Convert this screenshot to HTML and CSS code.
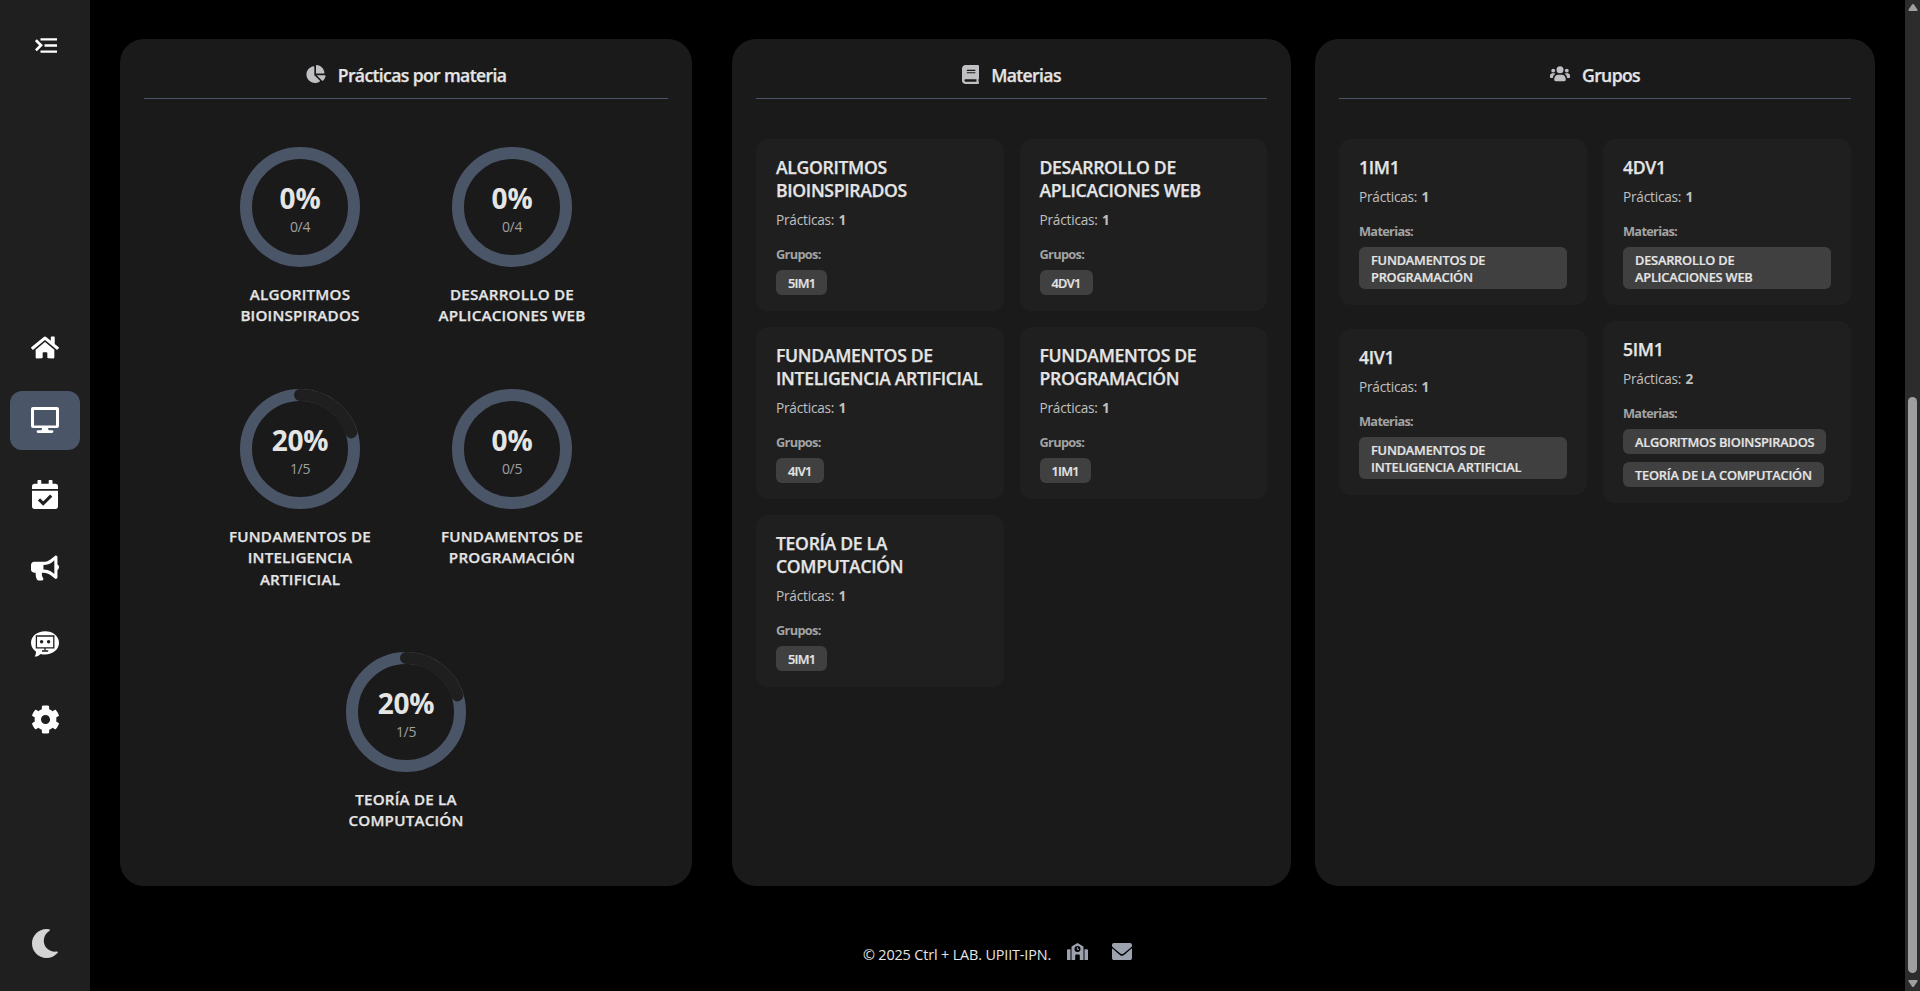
FILE: index.html
```html
<!DOCTYPE html>
<html lang="es">
<head>
<meta charset="utf-8">
<title>Ctrl + LAB</title>
<link rel="stylesheet" href="styles.css">
</head>
<body>
<svg class="sprite" aria-hidden="true">
  <symbol id="i-home" viewBox="0 0 576 512"><path d="M280.37 148.26L96 300.11V464a16 16 0 0 0 16 16l112.06-.29a16 16 0 0 0 15.92-16V368a16 16 0 0 1 16-16h64a16 16 0 0 1 16 16v95.64a16 16 0 0 0 16 16.05L464 480a16 16 0 0 0 16-16V300L295.67 148.26a12.19 12.19 0 0 0-15.3 0zM571.6 251.47L488 182.56V44.05a12 12 0 0 0-12-12h-56a12 12 0 0 0-12 12v72.61L318.47 43a48 48 0 0 0-61 0L4.34 251.47a12 12 0 0 0-1.6 16.9l25.5 31A12 12 0 0 0 45.15 301l235.22-193.74a12.19 12.19 0 0 1 15.3 0L530.9 301a12 12 0 0 0 16.9-1.6l25.5-31a12 12 0 0 0-1.7-16.93z"/></symbol>
  <symbol id="i-horn" viewBox="0 0 576 512"><path d="M576 240c0-23.63-12.95-44.04-32-55.12V32.01C544 23.26 537.02 0 512 0c-7.12 0-14.19 2.38-19.98 7.02l-85.03 68.03C364.28 109.19 310.66 128 256 128H64c-35.35 0-64 28.65-64 64v96c0 35.35 28.65 64 64 64h33.7c-1.39 10.48-2.18 21.14-2.18 32 0 39.77 9.26 77.35 25.56 110.94 5.19 10.69 16.52 17.06 28.4 17.06h74.28c26.05 0 41.69-29.84 25.9-50.56-16.4-21.52-26.15-48.36-26.15-77.44 0-11.11 1.62-21.79 4.41-32H256c54.66 0 108.28 18.81 150.98 52.95l85.03 68.03a32.023 32.023 0 0 0 19.98 7.02c24.92 0 32-22.78 32-32V295.13C563.05 284.04 576 263.63 576 240zm-96 141.42l-33.05-26.44C392.95 311.78 325.12 288 256 288v-96c69.12 0 136.95-23.78 190.95-66.98L480 98.58v282.84z"/></symbol>
  <symbol id="i-gear" viewBox="0 0 512 512"><path d="M487.4 315.7l-42.6-24.6c4.3-23.2 4.3-47 0-70.2l42.6-24.6c4.9-2.8 7.1-8.6 5.5-14-11.1-35.6-30-67.8-54.7-94.6-3.8-4.1-10-5.1-14.8-2.3L380.8 110c-17.9-15.4-38.5-27.3-60.8-35.1V25.8c0-5.6-3.9-10.5-9.4-11.7-36.7-8.2-74.3-7.8-109.2 0-5.5 1.2-9.4 6.1-9.4 11.7V75c-22.2 7.9-42.8 19.8-60.8 35.1L88.7 85.5c-4.9-2.8-11-1.9-14.8 2.3-24.7 26.7-43.6 58.9-54.7 94.6-1.7 5.4.6 11.2 5.5 14L67.3 221c-4.3 23.2-4.3 47 0 70.2l-42.6 24.6c-4.9 2.8-7.1 8.6-5.5 14 11.1 35.6 30 67.8 54.7 94.6 3.8 4.1 10 5.1 14.8 2.3l42.6-24.6c17.9 15.4 38.5 27.3 60.8 35.1v49.2c0 5.6 3.9 10.5 9.4 11.7 36.7 8.2 74.3 7.8 109.2 0 5.5-1.2 9.4-6.1 9.4-11.7v-49.2c22.2-7.9 42.8-19.8 60.8-35.1l42.6 24.6c4.9 2.8 11 1.9 14.8-2.3 24.7-26.7 43.6-58.9 54.7-94.6 1.5-5.5-.7-11.3-5.6-14.1zM256 336c-44.1 0-80-35.9-80-80s35.9-80 80-80 80 35.9 80 80-35.9 80-80 80z"/></symbol>
  <symbol id="i-pie" viewBox="0 0 544 512"><path d="M527.79 288H290.5l158.03 158.03c6.04 6.04 15.98 6.53 22.19.68 38.7-36.46 65.32-85.61 73.13-140.86 1.34-9.46-6.51-17.85-16.06-17.85zm-15.83-64.8C503.72 103.74 408.26 8.28 288.8.04 279.68-.59 272 7.1 272 16.24V240h223.77c9.14 0 16.82-7.68 16.19-16.8zM224 288V50.71c0-9.55-8.39-17.4-17.84-16.06C86.99 51.49-4.1 155.6.14 280.37 4.5 408.51 114.83 513.59 243.03 511.98c50.4-.63 96.97-16.87 135.26-44.03 7.9-5.6 8.42-17.23 1.57-24.08L224 288z"/></symbol>
  <symbol id="i-book" viewBox="0 0 448 512" preserveAspectRatio="none"><path d="M448 360V24c0-13.3-10.7-24-24-24H96C43 0 0 43 0 96v320c0 53 43 96 96 96h328c13.3 0 24-10.7 24-24v-16c0-7.5-3.5-14.3-8.9-18.7-4.2-15.4-4.2-59.3 0-74.7 5.4-4.3 8.9-11.1 8.9-18.6zM128 134c0-3.3 2.7-6 6-6h212c3.3 0 6 2.7 6 6v20c0 3.3-2.7 6-6 6H134c-3.3 0-6-2.7-6-6v-20zm0 64c0-3.3 2.7-6 6-6h212c3.3 0 6 2.7 6 6v20c0 3.3-2.7 6-6 6H134c-3.3 0-6-2.7-6-6v-20zm253.4 250H96c-17.7 0-32-14.3-32-32 0-17.6 14.4-32 32-32h285.4c-1.9 17.1-1.9 46.9 0 64z"/></symbol>
  <symbol id="i-mail" viewBox="0 64 512 384" preserveAspectRatio="none"><path d="M502.3 190.8c3.9-3.1 9.7-.2 9.7 4.7V400c0 26.5-21.5 48-48 48H48c-26.5 0-48-21.5-48-48V195.6c0-5 5.7-7.8 9.7-4.7 22.4 17.4 52.1 39.5 154.1 113.6 21.1 15.4 56.7 47.8 92.2 47.6 35.7.3 72-32.8 92.3-47.6 102-74.1 131.6-96.3 154-113.7zM256 320c23.2.4 56.6-29.2 73.4-41.4 132.7-96.3 142.8-104.7 173.4-128.7 5.8-4.5 9.2-11.5 9.2-18.9v-19c0-26.5-21.5-48-48-48H48c-26.5 0-48 21.5-48 48v19c0 7.4 3.4 14.3 9.2 18.9 30.6 23.9 40.7 32.4 173.4 128.7 16.8 12.2 50.2 41.8 73.4 41.4z"/></symbol>
</svg>

<div class="app">
  <aside class="sidebar">
    <svg class="menu" viewBox="0 0 22 15" fill="none" stroke="currentColor"><path d="M.9 2.200 6 7.300.9 12.400" stroke-width="2.700"/><path d="M5.500 1.300H22M9.500 7.500H22M5.500 13.700H22" stroke-width="2.300"/></svg>
    <nav class="nav">
      <a class="nav-item home"><svg width="28" height="25"><use href="#i-home"/></svg></a>
      <a class="nav-item active"><svg width="28" height="26" viewBox="0 0 28 26"><path fill-rule="evenodd" d="M2 0h24a2 2 0 0 1 2 2v17a2 2 0 0 1-2 2H17l.6 2.200H21a1.400 1.400 0 0 1 0 2.800H7a1.400 1.400 0 0 1 0-2.800h3.600L11 21H2a2 2 0 0 1-2-2V2a2 2 0 0 1 2-2zm1 3v15.500h22V3z"/></svg></a>
      <a class="nav-item calendar"><svg width="26" height="29" viewBox="0 0 26 29"><path d="M0 9V6.500a2.700 2.700 0 0 1 2.700-2.700H5.500V1a.9.9 0 0 1 .9-1h2a.9.9 0 0 1 .9 1v2.800h7.400V1a.9.9 0 0 1 .9-1h2a.9.9 0 0 1 .9 1v2.800h2.800A2.700 2.700 0 0 1 26 6.500V9zM0 10.800h26v15.500a2.700 2.700 0 0 1-2.700 2.700H2.700A2.700 2.700 0 0 1 0 26.300z"/><path class="cut-line" stroke-width="3" d="m7 19.400 4.200 4.200 8-8"/></svg></a>
      <a class="nav-item notices"><svg width="28" height="26"><use href="#i-horn"/></svg></a>
      <a class="nav-item bot"><svg width="28" height="26" viewBox="0 0 28 26"><path d="M14 .3C6.200.300 0 5.300 0 11.800c0 3.500 1.900 6.600 4.900 8.800.2 2-.3 3.700-1.300 5 2.500 0 4.500-1.100 6-2.700 1.400.4 2.800.6 4.400.6 7.800 0 14-5 14-11.700S21.800.3 14 .3z"/><path class="cut-line" stroke-width="1.300" d="M5.400 5h17.400v11.800H5.400zM14 16.800v3M11 20h6.200"/><circle class="cut" cx="10.600" cy="10.800" r="1.700"/><circle class="cut" cx="17.600" cy="10.800" r="1.700"/></svg></a>
      <a class="nav-item settings"><svg width="29" height="29"><use href="#i-gear"/></svg></a>
    </nav>
    <svg class="moon" viewBox="0 0 26 29"><path d="M14.500 0C6.500 0 0 6.500 0 14.500S6.500 29 14.500 29c4.400 0 8.300-1.900 11-5 .7-.8.200-1.700-.8-1.500C17.800 23.500 11.800 18.500 11.800 11.700c0-4.100 2.200-7.600 5.500-9.700 1-.6.700-1.700-.3-1.800A14 14 0 0 0 14.500 0z"/></svg>
  </aside>

  <main class="main">
    <div class="panels">
      <section class="panel">
        <h2 class="panel-title"><svg width="20" height="18"><use href="#i-pie"/></svg><span>Prácticas por materia</span></h2>
        <div class="rings">
          <div class="ring-item"><div class="ring"><svg width="120" height="120"><circle class="track" cx="60" cy="60" r="54"/></svg><div class="ring-text"><b>0%</b><span>0/4</span></div></div><p>ALGORITMOS<br>BIOINSPIRADOS</p></div>
          <div class="ring-item"><div class="ring"><svg width="120" height="120"><circle class="track" cx="60" cy="60" r="54"/></svg><div class="ring-text"><b>0%</b><span>0/4</span></div></div><p>DESARROLLO DE<br>APLICACIONES WEB</p></div>
          <div class="ring-item"><div class="ring"><svg width="120" height="120"><circle class="track" cx="60" cy="60" r="54"/><circle class="value" cx="60" cy="60" r="54" pathLength="100" stroke-dasharray="20 100" transform="rotate(-90 60 60)"/></svg><div class="ring-text"><b>20%</b><span>1/5</span></div></div><p>FUNDAMENTOS DE<br>INTELIGENCIA<br>ARTIFICIAL</p></div>
          <div class="ring-item"><div class="ring"><svg width="120" height="120"><circle class="track" cx="60" cy="60" r="54"/></svg><div class="ring-text"><b>0%</b><span>0/5</span></div></div><p>FUNDAMENTOS DE<br>PROGRAMACIÓN</p></div>
          <div class="ring-item"><div class="ring"><svg width="120" height="120"><circle class="track" cx="60" cy="60" r="54"/><circle class="value" cx="60" cy="60" r="54" pathLength="100" stroke-dasharray="20 100" transform="rotate(-90 60 60)"/></svg><div class="ring-text"><b>20%</b><span>1/5</span></div></div><p>TEORÍA DE LA<br>COMPUTACIÓN</p></div>
        </div>
      </section>

      <section class="panel">
        <h2 class="panel-title"><svg width="17" height="19"><use href="#i-book"/></svg><span>Materias</span></h2>
        <div class="cards">
          <article class="card"><h3>ALGORITMOS<br>BIOINSPIRADOS</h3><p class="count">Prácticas: <b>1</b></p><p class="sub">Grupos:</p><div class="tags"><span class="tag">5IM1</span></div></article>
          <article class="card"><h3>DESARROLLO DE<br>APLICACIONES WEB</h3><p class="count">Prácticas: <b>1</b></p><p class="sub">Grupos:</p><div class="tags"><span class="tag">4DV1</span></div></article>
          <article class="card"><h3>FUNDAMENTOS DE<br>INTELIGENCIA ARTIFICIAL</h3><p class="count">Prácticas: <b>1</b></p><p class="sub">Grupos:</p><div class="tags"><span class="tag">4IV1</span></div></article>
          <article class="card"><h3>FUNDAMENTOS DE<br>PROGRAMACIÓN</h3><p class="count">Prácticas: <b>1</b></p><p class="sub">Grupos:</p><div class="tags"><span class="tag">1IM1</span></div></article>
          <article class="card"><h3>TEORÍA DE LA<br>COMPUTACIÓN</h3><p class="count">Prácticas: <b>1</b></p><p class="sub">Grupos:</p><div class="tags"><span class="tag">5IM1</span></div></article>
        </div>
      </section>

      <section class="panel">
        <h2 class="panel-title"><svg class="users" width="20" height="16" viewBox="0 0 20 16"><circle cx="10" cy="3.800" r="3.500"/><circle cx="3.200" cy="4.600" r="1.900"/><circle cx="16.800" cy="4.600" r="1.900"/><path d="M4.200 13.500c0-3 1.800-4.800 4-4.800h3.600c2.200 0 4 1.800 4 4.800 0 1.200-.5 1.700-1.500 1.700H5.700c-1 0-1.500-.5-1.500-1.700zM0 11.600V9.800c0-1.500 1-2.500 2.300-2.500h1.800c.5 0 .9.200 1.300.5-1.500.9-2.400 2.300-2.600 4.300H.6c-.4 0-.6-.2-.6-.5zM20 11.600V9.800c0-1.500-1-2.500-2.300-2.500h-1.800c-.5 0-.9.200-1.300.5 1.500.9 2.400 2.300 2.600 4.300h2.200c.4 0 .6-.2.6-.5z"/></svg><span>Grupos</span></h2>
        <div class="cards groups">
          <article class="card"><h3>1IM1</h3><p class="count">Prácticas: <b>1</b></p><p class="sub">Materias:</p><div class="tags"><span class="tag wide">FUNDAMENTOS DE<br>PROGRAMACIÓN</span></div></article>
          <article class="card"><h3>4DV1</h3><p class="count">Prácticas: <b>1</b></p><p class="sub">Materias:</p><div class="tags"><span class="tag wide">DESARROLLO DE<br>APLICACIONES WEB</span></div></article>
          <article class="card"><h3>4IV1</h3><p class="count">Prácticas: <b>1</b></p><p class="sub">Materias:</p><div class="tags"><span class="tag wide">FUNDAMENTOS DE<br>INTELIGENCIA ARTIFICIAL</span></div></article>
          <article class="card"><h3>5IM1</h3><p class="count">Prácticas: <b>2</b></p><p class="sub">Materias:</p><div class="tags"><span class="tag">ALGORITMOS BIOINSPIRADOS</span><span class="tag">TEORÍA DE LA COMPUTACIÓN</span></div></article>
        </div>
      </section>
    </div>

    <footer class="footer">
      <span class="copy">© 2025 Ctrl + LAB. UPIIT-IPN.</span>
      <svg class="school" width="21" height="17" viewBox="0 0 21 17"><path fill-rule="evenodd" d="M10.500 0 16 3.200a1 1 0 0 1 .5.900V17h-3.700v-4.500a1 1 0 0 0-1-1H9.200a1 1 0 0 0-1 1V17H4.500V4.100a1 1 0 0 1 .5-.9zM10.500 3a3 3 0 1 0 0 6 3 3 0 0 0 0-6zM0 17V7.300a1 1 0 0 1 1-1h2.500V17zM21 17V7.300a1 1 0 0 0-1-1h-2.500V17z"/><path d="M10.300 4.200v2.200h1.800" fill="none" stroke="currentColor"/></svg>
      <svg class="mail" width="20" height="17"><use href="#i-mail"/></svg>
    </footer>
  </main>

  <div class="scrollbar">
    <svg class="arrow" width="10" height="7" viewBox="0 0 10 7"><path d="M5 0c.4 0 .7.200 1 .6L9.400 5.600c.4.700.1 1.400-.7 1.400H1.300c-.8 0-1.100-.7-.7-1.400L4 .6c.3-.4.6-.6 1-.6z"/></svg>
    <div class="thumb"></div>
    <svg class="arrow down" width="10" height="7" viewBox="0 0 10 7"><path d="M5 0c.4 0 .7.200 1 .6L9.400 5.600c.4.700.1 1.400-.7 1.400H1.300c-.8 0-1.100-.7-.7-1.400L4 .6c.3-.4.6-.6 1-.6z"/></svg>
  </div>
</div>
</body>
</html>
```
FILE: styles.css
```css
* { box-sizing: border-box; margin: 0; padding: 0; }
body {
  background: #000;
  color: #e5e5e5;
  font-family: "Open Sans", "Noto Sans", sans-serif;
  overflow: hidden;
}
svg { display: block; fill: currentColor; flex: none; }
.sprite { display: none; }
.app { display: flex; width: 1920px; height: 991px; }

.sidebar {
  width: 90px;
  background: #1f1f1f;
  color: #fff;
  display: flex;
  flex-direction: column;
  align-items: center;
  padding: 38px 10px 33px;
}
.menu { width: 22px; height: 15px; fill: none; margin-left: 1px; }
.nav { display: flex; flex-direction: column; gap: 16px; margin-top: 267px; width: 70px; }
.nav-item {
  height: 59px;
  border-radius: 12px;
  display: flex;
  align-items: center;
  justify-content: center;
}
.nav-item.active { background: #4a5568; }
.nav-item.active svg { margin-top: -1px; }
.nav-item.home { height: 55px; }
.nav-item.calendar { height: 57px; }
.nav-item.notices { height: 58px; }
.nav-item.bot { height: 61px; }
.nav-item.settings { height: 58px; }
.cut { fill: #1f1f1f; }
.cut-line { fill: none; stroke: #1f1f1f; }
.moon { width: 26px; height: 29px; color: #d4d4d4; margin: auto 0 0; }

.main { flex: 1; padding: 39px 30px 0; display: flex; flex-direction: column; }
.panels { display: grid; grid-template-columns: 588px 559px 560px; column-gap: 24px; height: 847px; }
.panels > .panel:first-child { width: 572px; }
.panel { background: #1a1a1a; border-radius: 24px; padding: 24px; }
.panel-title {
  height: 36px;
  border-bottom: 1px solid #4a5568;
  display: flex;
  justify-content: center;
  gap: 12px;
  font-size: 17.6px;
  font-weight: 600;
  -webkit-text-stroke: .25px;
  line-height: 25px;
  letter-spacing: -.64px;
}
.panel-title svg { color: #c0c0c4; margin-top: 2px; }
.panel-title .users { margin-top: 3px; }

.rings {
  display: flex;
  flex-wrap: wrap;
  justify-content: center;
  column-gap: 40px;
  row-gap: 62.4px;
  margin-top: 48px;
}
.ring-item { width: 172px; }
.ring { position: relative; width: 120px; height: 120px; margin: 0 auto; }
.ring circle { fill: none; stroke-width: 12; }
.track { stroke: #4a5568; }
.value { stroke: #1f1f1f; stroke-linecap: round; }
.ring-text {
  position: absolute;
  inset: 0;
  display: flex;
  flex-direction: column;
  align-items: center;
  padding-top: 32px;
}
.ring-text b { font-size: 28px; line-height: 38px; letter-spacing: -.2px; }
.ring-text span { font-size: 14px; line-height: 20px; color: #a0a0a0; letter-spacing: -.3px; }
.ring-item p {
  margin-top: 17px;
  font-size: 15.2px;
  font-weight: 600;
  -webkit-text-stroke: .25px;
  line-height: 21.28px;
  text-align: center;
  white-space: nowrap;
  letter-spacing: .2px;
}

.cards {
  display: grid;
  grid-template-columns: 1fr 1fr;
  gap: 16px;
  margin-top: 40px;
  align-items: center;
}
.card { background: #1f1f1f; border-radius: 12px; padding: 17px 20px 16px; }
.card h3 {
  font-size: 17.6px;
  font-weight: 600;
  -webkit-text-stroke: .25px;
  line-height: 23px;
  letter-spacing: -.32px;
  white-space: nowrap;
}
.count { margin-top: 8px; font-size: 13.6px; line-height: 19px; color: #c0c0c0; letter-spacing: -.2px; }
.count b { margin-left: 1px; }
.sub { margin-top: 17px; font-size: 12.8px; line-height: 17px; font-weight: 700; color: #a3a3a3; letter-spacing: -.7px; }
.tags { margin-top: 7px; display: flex; flex-wrap: wrap; gap: 8px; }
.tag {
  background: #404040;
  border-radius: 6px;
  padding: 4.500px 12px 3.500px;
  font-size: 12.8px;
  font-weight: 600;
  -webkit-text-stroke: .2px;
  line-height: 17px;
  letter-spacing: -.22px;
  white-space: nowrap;
}
.cards:not(.groups) .tag { letter-spacing: -.75px; }
.tag.wide { width: 100%; }

.footer { display: flex; justify-content: center; margin-top: 57px; color: #9ca3af; }
.copy { font-size: 14.4px; line-height: 24px; color: #e5e5e5; letter-spacing: -.14px; }
.school { margin-left: 16px; }
.mail { margin-left: 24px; }

.scrollbar { width: 15px; background: #2c2c2c; color: #9f9f9f; display: flex; flex-direction: column; align-items: center; padding: 4px 0; }
.thumb { width: 9px; height: 576px; border-radius: 5px; background: #9f9f9f; margin-top: 386px; }
.arrow.down { transform: rotate(180deg); margin-top: 7px; }
```
